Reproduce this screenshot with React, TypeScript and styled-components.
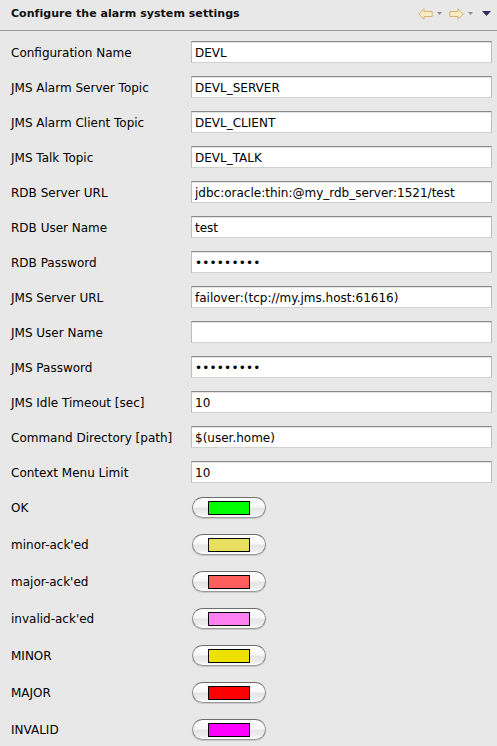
import React from "react";
import styled, { createGlobalStyle } from "styled-components";

const Global = createGlobalStyle`
  html, body { margin: 0; padding: 0; background: #e8e8e8; }
  body { font-family: "DejaVu Sans", "Liberation Sans", sans-serif; font-size: 12px; color: #000; }
`;

const Page = styled.div`
  width: 497px;
  height: 746px;
  overflow: hidden;
  background: #e8e8e8;
`;

const Header = styled.div`
  height: 30px;
  border-bottom: 1px solid #999;
  display: flex;
  align-items: center;
  padding: 0 6px 0 11px;
`;

const Title = styled.h1`
  margin: 0;
  flex: 1;
  font-size: 11px;
  font-weight: bold;
  letter-spacing: 0.05px;
  color: #111;
  padding-bottom: 3px;
`;

const Tools = styled.div`
  display: flex;
  align-items: center;
  padding-bottom: 3px;
`;

const ToolButton = styled.span<{ $gap: number }>`
  display: inline-flex;
  align-items: center;
  margin-left: ${(p) => p.$gap}px;
`;

const Form = styled.div`
  padding: 10px 5px 0 11px;
  display: flex;
  flex-direction: column;
  gap: 13px;
`;

const ColorList = styled.div`
  margin-top: 1px;
  display: flex;
  flex-direction: column;
  gap: 16px;
`;

const Row = styled.div<{ $h: number }>`
  display: flex;
  align-items: center;
  height: ${(p) => p.$h}px;
`;

const Label = styled.label`
  width: 180px;
  flex: none;
  font-size: 12px;
  white-space: nowrap;
  padding-top: 1px;
`;

const Field = styled.input`
  box-sizing: border-box;
  width: 301px;
  height: 22px;
  margin: 0;
  padding: 1px 2px 0 3px;
  font-family: "DejaVu Sans", "Liberation Sans", sans-serif;
  font-size: 12px;
  color: #000;
  background: #fff;
  border: 1px solid #bdbdbd;
  border-top-color: #8a8a8a;
  border-bottom-color: #d2d2d2;
  box-shadow: inset 0 1px 0 #e4e4e4;
  outline: none;
  &[type="password"] { letter-spacing: 0.2px; font-size: 12px; }
`;

const PillButton = styled.button`
  box-sizing: border-box;
  width: 74px;
  height: 21px;
  margin: 0 0 0 1px;
  padding: 0;
  display: flex;
  align-items: center;
  justify-content: center;
  border-radius: 11px;
  border: 1px solid #8a8a8a;
  border-top-color: #6e6e6e;
  border-bottom-color: #9a9a9a;
  background: linear-gradient(to bottom, #ffffff 0%, #f7f7f7 45%, #e6e6e6 55%, #ececec 80%, #ffffff 100%);
  box-shadow: 0 1px 1px rgba(0,0,0,0.15), inset 0 1px 1px rgba(255,255,255,0.9);
`;

const Swatch = styled.span<{ $c: string }>`
  display: block;
  box-sizing: border-box;
  width: 42px;
  height: 14px;
  border: 1px solid #000;
  background: ${(p) => p.$c};
`;

const BackArrow = ({ flip }: { flip?: boolean }) => (
  <svg width="15" height="12" viewBox="0 0 15 12" style={flip ? { transform: "scaleX(-1)" } : undefined}>
    <path d="M0.8 6 L6 0.8 L6 3.5 L14.2 3.5 L14.2 8.5 L6 8.5 L6 11.2 Z" fill="#f8ecc8" stroke="#d6b56e" strokeWidth="1" strokeLinejoin="round" />
  </svg>
);

const SmallTri = ({ color, w, h }: { color: string; w: number; h: number }) => (
  <svg width={w} height={h} viewBox={`0 0 ${w} ${h}`}>
    <path d={`M0 0 L${w} 0 L${w / 2} ${h} Z`} fill={color} />
  </svg>
);

const textRows: { label: string; value: string; pw?: boolean }[] = [
  { label: "Configuration Name", value: "DEVL" },
  { label: "JMS Alarm Server Topic", value: "DEVL_SERVER" },
  { label: "JMS Alarm Client Topic", value: "DEVL_CLIENT" },
  { label: "JMS Talk Topic", value: "DEVL_TALK" },
  { label: "RDB Server URL", value: "jdbc:oracle:thin:@my_rdb_server:1521/test" },
  { label: "RDB User Name", value: "test" },
  { label: "RDB Password", value: "secretpwd", pw: true },
  { label: "JMS Server URL", value: "failover:(tcp://my.jms.host:61616)" },
  { label: "JMS User Name", value: "" },
  { label: "JMS Password", value: "secretpwd", pw: true },
  { label: "JMS Idle Timeout [sec]", value: "10" },
  { label: "Command Directory [path]", value: "$(user.home)" },
  { label: "Context Menu Limit", value: "10" },
];

const colorRows: { label: string; color: string }[] = [
  { label: "OK", color: "#00ff00" },
  { label: "minor-ack'ed", color: "#e8de60" },
  { label: "major-ack'ed", color: "#ff5e5e" },
  { label: "invalid-ack'ed", color: "#ff80f0" },
  { label: "MINOR", color: "#eee000" },
  { label: "MAJOR", color: "#ff0000" },
  { label: "INVALID", color: "#ff00ff" },
];

export default function App() {
  return (
    <Page>
      <Global />
      <Header>
        <Title>Configure the alarm system settings</Title>
        <Tools>
          <ToolButton $gap={0}><BackArrow /></ToolButton>
          <ToolButton $gap={4}><SmallTri color="#8c8c8c" w={5} h={3} /></ToolButton>
          <ToolButton $gap={7}><BackArrow flip /></ToolButton>
          <ToolButton $gap={4}><SmallTri color="#8c8c8c" w={5} h={3} /></ToolButton>
          <ToolButton $gap={9}><SmallTri color="#2e2e5e" w={9} h={5} /></ToolButton>
        </Tools>
      </Header>
      <Form>
        {textRows.map((r) => (
          <Row key={r.label} $h={22}>
            <Label>{r.label}</Label>
            <Field type={r.pw ? "password" : "text"} defaultValue={r.value} readOnly />
          </Row>
        ))}
        <ColorList>
          {colorRows.map((r) => (
            <Row key={r.label} $h={21}>
              <Label>{r.label}</Label>
              <PillButton aria-label={r.label}>
                <Swatch $c={r.color} />
              </PillButton>
            </Row>
          ))}
        </ColorList>
      </Form>
    </Page>
  );
}
